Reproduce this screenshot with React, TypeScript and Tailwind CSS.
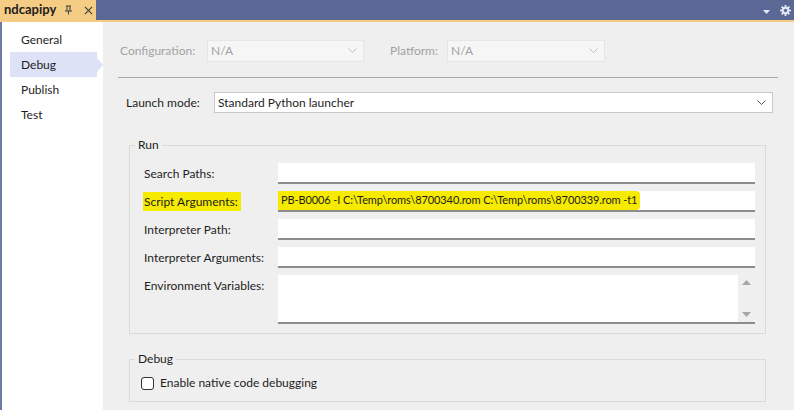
import React from "react";

const font = { fontFamily: 'Lato, "Noto Sans", sans-serif' };

function Chevron({ className }: { className?: string }) {
  return (
    <svg width="9" height="6" viewBox="0 0 9 6" className={className}>
      <path d="M0.5 0.5 L4.5 4.5 L8.5 0.5" fill="none" stroke="currentColor" strokeWidth="1" />
    </svg>
  );
}

function Field({ label, highlight, value }: { label: string; highlight?: boolean; value?: string }) {
  return (
    <div className="flex items-center h-[21px] mb-[7px]">
      <div className="w-[148px] pl-[14px] shrink-0 whitespace-nowrap">
        {highlight ? (
          <span className="bg-[#f5ea00] py-[2px] pr-[3px] pl-[1px] -ml-[1px]">{label}</span>
        ) : (
          label
        )}
      </div>
      <div className="flex-1 h-[21px] bg-white border-b-2 border-[#8c8c8c] flex items-center">
        {value && (
          <span className="bg-[#f5ea00] h-[19px] flex items-center pl-[3px] pr-[3px] rounded-r-[4px] whitespace-nowrap text-[11px] tracking-[-0.1px]">{value}</span>
        )}
      </div>
    </div>
  );
}

export default function App() {
  return (
    <div className="w-[794px] h-[410px] overflow-hidden bg-[#efefef] flex flex-col text-[12px] text-[#1e1e1e]" style={font}>
      {/* title bar */}
      <div className="h-[20px] bg-[#5b6895] flex items-center shrink-0">
        <div className="w-[96px] h-full bg-[#f5cc84] flex items-center pl-[4px]">
          <span className="font-bold text-[13px] text-[#1e1e1e] w-[56px]">ndcapipy</span>
          <svg width="9" height="10" viewBox="0 0 9 10" className="ml-[4px] text-[#3a3a3a]">
            <path d="M2 1 H7 M3 1 V6 M6 1 V6 M1 6 H8 M4.5 6 V9.5" fill="none" stroke="currentColor" strokeWidth="1" />
          </svg>
          <svg width="9" height="9" viewBox="0 0 10 10" className="ml-[11px] text-[#3a3a3a]">
            <path d="M1 1 L9 9 M9 1 L1 9" fill="none" stroke="currentColor" strokeWidth="1.2" />
          </svg>
        </div>
        <div className="flex-1" />
        <svg width="7" height="4" viewBox="0 0 7 4" className="mr-[10px] mt-[3px]">
          <path d="M0 0 H7 L3.5 4 Z" fill="#e4e8f4" />
        </svg>
        <svg width="11" height="11" viewBox="0 0 12 12" className="mr-[3px]">
          <g fill="#e4e8f4">
            <rect x="5" y="0" width="2" height="12" />
            <rect x="0" y="5" width="12" height="2" />
            <rect x="5" y="0" width="2" height="12" transform="rotate(45 6 6)" />
            <rect x="5" y="0" width="2" height="12" transform="rotate(-45 6 6)" />
            <circle cx="6" cy="6" r="4" />
          </g>
          <circle cx="6" cy="6" r="1.8" fill="#5b6895" />
        </svg>
      </div>
      <div className="h-[2px] bg-[#f5cc84] shrink-0" />

      <div className="flex flex-1 min-h-0">
        {/* sidebar */}
        <div className="w-[103px] bg-white border-l-2 border-[#6e7aa3] pt-[5px] shrink-0">
          <div className="h-[25px] flex items-center pl-[19px]">General</div>
          <div className="h-[25px] flex items-center">
            <div className="ml-[8px] w-[87px] h-full bg-[#dde2f7] flex items-center pl-[11px]">Debug</div>
            <div className="w-0 h-0 border-y-[7px] border-y-transparent border-l-[6px] border-l-[#dde2f7]" />
          </div>
          <div className="h-[25px] flex items-center pl-[19px]">Publish</div>
          <div className="h-[25px] flex items-center pl-[19px]">Test</div>
        </div>

        {/* content */}
        <div className="flex-1 pt-[18px] pr-[16px]">
          <div className="flex items-center h-[22px] pl-[17px] text-[#a2a2a2]">
            <span className="w-[87px]">Configuration:</span>
            <div className="w-[157px] h-full bg-[#f6f6f6] border border-[#e6e6e6] flex items-center pl-[3px] pr-[6px]">
              <span className="flex-1">N/A</span>
              <Chevron className="text-[#c0c0c0]" />
            </div>
            <span className="ml-[26px] w-[57px]">Platform:</span>
            <div className="w-[158px] h-full bg-[#f6f6f6] border border-[#e6e6e6] flex items-center pl-[3px] pr-[6px]">
              <span className="flex-1">N/A</span>
              <Chevron className="text-[#c0c0c0]" />
            </div>
          </div>

          <div className="ml-[15px] mt-[15px] h-px bg-[#a8a8a8]" />

          <div className="flex items-center h-[21px] mt-[14px] pl-[23px] pr-[5px]">
            <span className="w-[88px]">Launch mode:</span>
            <div className="flex-1 h-full bg-white border border-[#c8c8c8] flex items-center pl-[3px] pr-[6px]">
              <span className="flex-1">Standard Python launcher</span>
              <Chevron className="text-[#555]" />
            </div>
          </div>

          {/* Run group */}
          <fieldset className="ml-[26px] mr-[12px] mt-[25px] border border-[#dadada] pt-[11px] pr-[10px] pb-[9px]">
            <legend className="ml-[5px] px-[3px] leading-[14px]">Run</legend>
            <Field label="Search Paths:" />
            <Field label="Script Arguments:" highlight value="PB-B0006 -I C:\Temp\roms\8700340.rom C:\Temp\roms\8700339.rom -t1" />
            <Field label="Interpreter Path:" />
            <Field label="Interpreter Arguments:" />
            <div className="flex h-[49px]">
              <div className="w-[148px] pl-[14px] shrink-0 pt-[2px] whitespace-nowrap">Environment Variables:</div>
              <div className="flex-1 bg-white border-b-2 border-[#8c8c8c] flex justify-end">
                <div className="w-[17px] bg-[#efefef] flex flex-col items-center justify-between py-[5px]">
                  <svg width="9" height="5" viewBox="0 0 9 5"><path d="M0 5 L4.5 0 L9 5 Z" fill="#a8a8a8" /></svg>
                  <svg width="9" height="5" viewBox="0 0 9 5"><path d="M0 0 L9 0 L4.5 5 Z" fill="#a8a8a8" /></svg>
                </div>
              </div>
            </div>
          </fieldset>

          {/* Debug group */}
          <fieldset className="ml-[26px] mr-[12px] mt-[18px] border border-[#dadada] pt-[8px] pb-[9px]">
            <legend className="ml-[5px] px-[3px] leading-[14px]">Debug</legend>
            <label className="flex items-center pl-[11px]">
              <span className="w-[13px] h-[13px] border border-[#333] rounded-[3px] bg-white" />
              <span className="ml-[6px]">Enable native code debugging</span>
            </label>
          </fieldset>
        </div>
      </div>
    </div>
  );
}
